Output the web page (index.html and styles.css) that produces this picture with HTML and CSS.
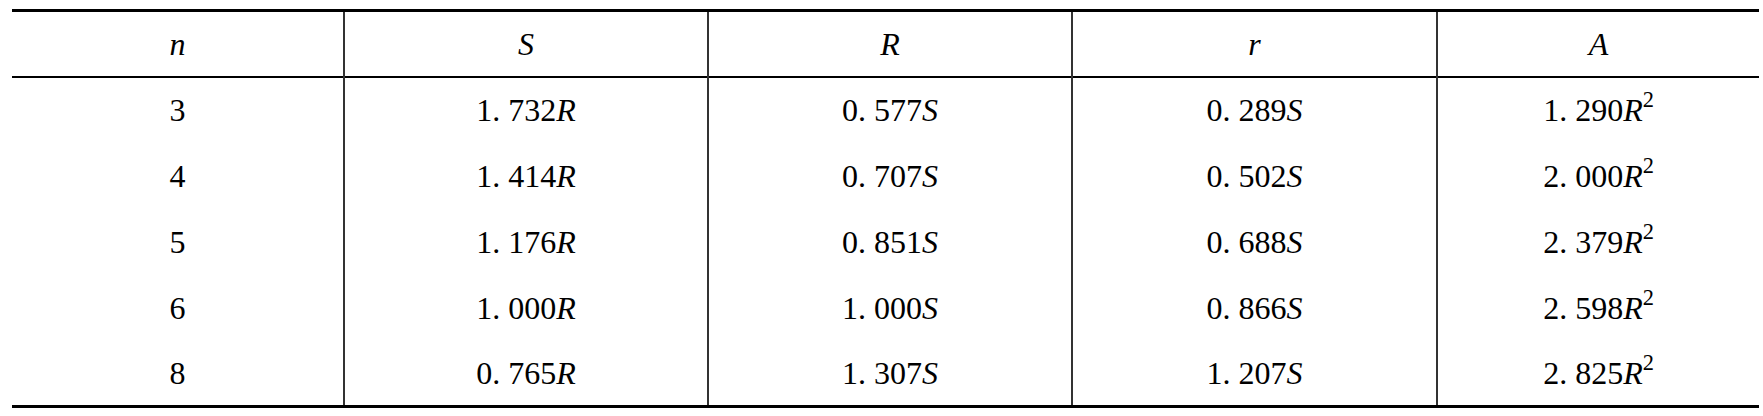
FILE: index.html
```html
<!DOCTYPE html>
<html>
<head>
<meta charset="utf-8">
<link rel="stylesheet" href="styles.css">
</head>
<body>
<table class="poly">
<colgroup>
<col class="c1"><col class="c2"><col class="c3"><col class="c4"><col class="c5">
</colgroup>
<thead>
<tr><th><i>n</i></th><th><i>S</i></th><th><i>R</i></th><th><i>r</i></th><th><i>A</i></th></tr>
</thead>
<tbody>
<tr><td>3</td><td>1. 732<i>R</i></td><td>0. 577<i>S</i></td><td>0. 289<i>S</i></td><td>1. 290<i>R</i><sup>2</sup></td></tr>
<tr><td>4</td><td>1. 414<i>R</i></td><td>0. 707<i>S</i></td><td>0. 502<i>S</i></td><td>2. 000<i>R</i><sup>2</sup></td></tr>
<tr><td>5</td><td>1. 176<i>R</i></td><td>0. 851<i>S</i></td><td>0. 688<i>S</i></td><td>2. 379<i>R</i><sup>2</sup></td></tr>
<tr><td>6</td><td>1. 000<i>R</i></td><td>1. 000<i>S</i></td><td>0. 866<i>S</i></td><td>2. 598<i>R</i><sup>2</sup></td></tr>
<tr><td>8</td><td>0. 765<i>R</i></td><td>1. 307<i>S</i></td><td>1. 207<i>S</i></td><td>2. 825<i>R</i><sup>2</sup></td></tr>
</tbody>
</table>
</body>
</html>
```
FILE: styles.css
```css
html, body {
  margin: 0;
  padding: 0;
  background: #fff;
}
body {
  padding: 9px 0 0 12px;
  font-family: "Liberation Serif", "Times New Roman", serif;
  color: #000;
}
.poly {
  border-collapse: collapse;
  table-layout: fixed;
  width: 1747px;
  font-size: 32px;
}
.c1 { width: 332px; }
.c2 { width: 364px; }
.c3 { width: 364px; }
.c4 { width: 365px; }
.c5 { width: 322px; }
.poly th, .poly td {
  padding: 0;
  text-align: center;
  vertical-align: middle;
  font-weight: normal;
  border-left: 2px solid #333;
  border-right: 2px solid #333;
  line-height: 1;
}
.poly th:first-child, .poly td:first-child { border-left: none; }
.poly th:last-child, .poly td:last-child { border-right: none; }
.poly thead tr {
  border-top: 3px solid #000;
  border-bottom: 2px solid #000;
  height: 66px;
}
.poly tbody tr {
  height: 66px;
}
.poly tbody tr:last-child {
  border-bottom: 3px solid #000;
}
.poly i {
  font-style: italic;
}
.poly sup {
  font-size: 0.7em;
  vertical-align: 0;
  position: relative;
  top: -0.62em;
  line-height: 0;
}
```
